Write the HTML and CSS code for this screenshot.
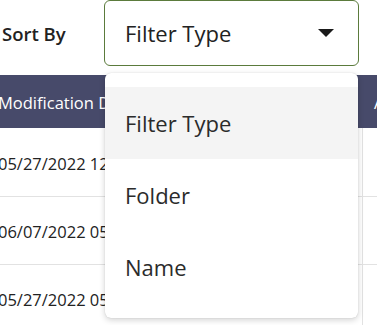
FILE: index.html
```html
<!DOCTYPE html>
<html lang="en">
<head>
    <meta charset="UTF-8">
    <title>Sort By</title>

    <link rel="stylesheet" href="styles.css">
</head>
<body>

<div class="page">
    <div class="toolbar">
        <label class="sort-label">Sort By</label>
        <div class="select-wrap">
            <div class="select">
                <span>Filter Type</span>
                <span class="caret"></span>
            </div>
            <ul class="menu">
                <li class="active">Filter Type</li>
                <li>Folder</li>
                <li>Name</li>
            </ul>
        </div>
    </div>

    <div class="grid-wrap">
        <table class="grid">
            <thead>
            <tr>
                <th class="col-date">Modification Date</th>
                <th class="col-next">Author</th>
            </tr>
            </thead>
            <tbody>
            <tr>
                <td>05/27/2022 12:14 PM</td>
                <td></td>
            </tr>
            <tr>
                <td>06/07/2022 05:32 AM</td>
                <td></td>
            </tr>
            <tr>
                <td>05/27/2022 05:10 AM</td>
                <td></td>
            </tr>
            </tbody>
        </table>
    </div>
</div>

</body>
</html>
```

FILE: styles.css
```css
* {
    margin: 0;
    padding: 0;
    box-sizing: border-box;
}

li {
    list-style-type: none;
}

body {
    font-family: "Open Sans", "Noto Sans", sans-serif;
    color: #1f1f1f;
    background: #fff;
    overflow: hidden;
}

.page {
    width: 377px;
    overflow: hidden;
}

.toolbar {
    position: relative;
    z-index: 2;
    display: flex;
    align-items: center;
    height: 66px;
}

.sort-label {
    width: 104px;
    padding-left: 2px;
    font-size: 18.5px;
    font-weight: 600;
    color: #222;
}

.select-wrap {
    position: relative;
}

.select {
    display: flex;
    align-items: center;
    justify-content: space-between;
    width: 255px;
    height: 66px;
    padding: 0 24px 0 20px;
    border: 1px solid #5b7b3c;
    border-radius: 6px;
    font-size: 22px;
    color: #222;
}

.caret {
    width: 0;
    height: 0;
    border-left: 8px solid transparent;
    border-right: 8px solid transparent;
    border-top: 8px solid #1a1a1a;
}

.menu {
    position: absolute;
    top: 73px;
    left: 1px;
    width: 253px;
    padding: 14px 0 15px;
    background: #fff;
    border-radius: 6px;
    box-shadow: 0 2px 6px rgba(0, 0, 0, .18), 0 0 1px rgba(0, 0, 0, .2);
}

.menu li {
    display: flex;
    align-items: center;
    height: 72px;
    padding-left: 20px;
    font-size: 22px;
    color: #2b2b2b;
}

.menu li.active {
    background: #f4f4f4;
}

.grid-wrap {
    margin: 9px 0 0 -2px;
    width: 520px;
}

.grid {
    width: 520px;
    table-layout: fixed;
    border-collapse: collapse;
    white-space: nowrap;
}

.grid th {
    height: 53px;
    padding-top: 2px;
    background: #474a6a;
    color: #fff;
    font-size: 16.5px;
    font-weight: 400;
    text-align: left;
    overflow: hidden;
}

.grid .col-date {
    width: 364px;
}

.grid .col-next {
    padding-left: 12px;
}

.grid td {
    height: 68px;
    padding-top: 3px;
    font-size: 16.5px;
    color: #222;
    border-bottom: 1px solid #e2e2e2;
    overflow: hidden;
}

.grid td:first-child {
    border-right: 1px solid #e2e2e2;
}
```
